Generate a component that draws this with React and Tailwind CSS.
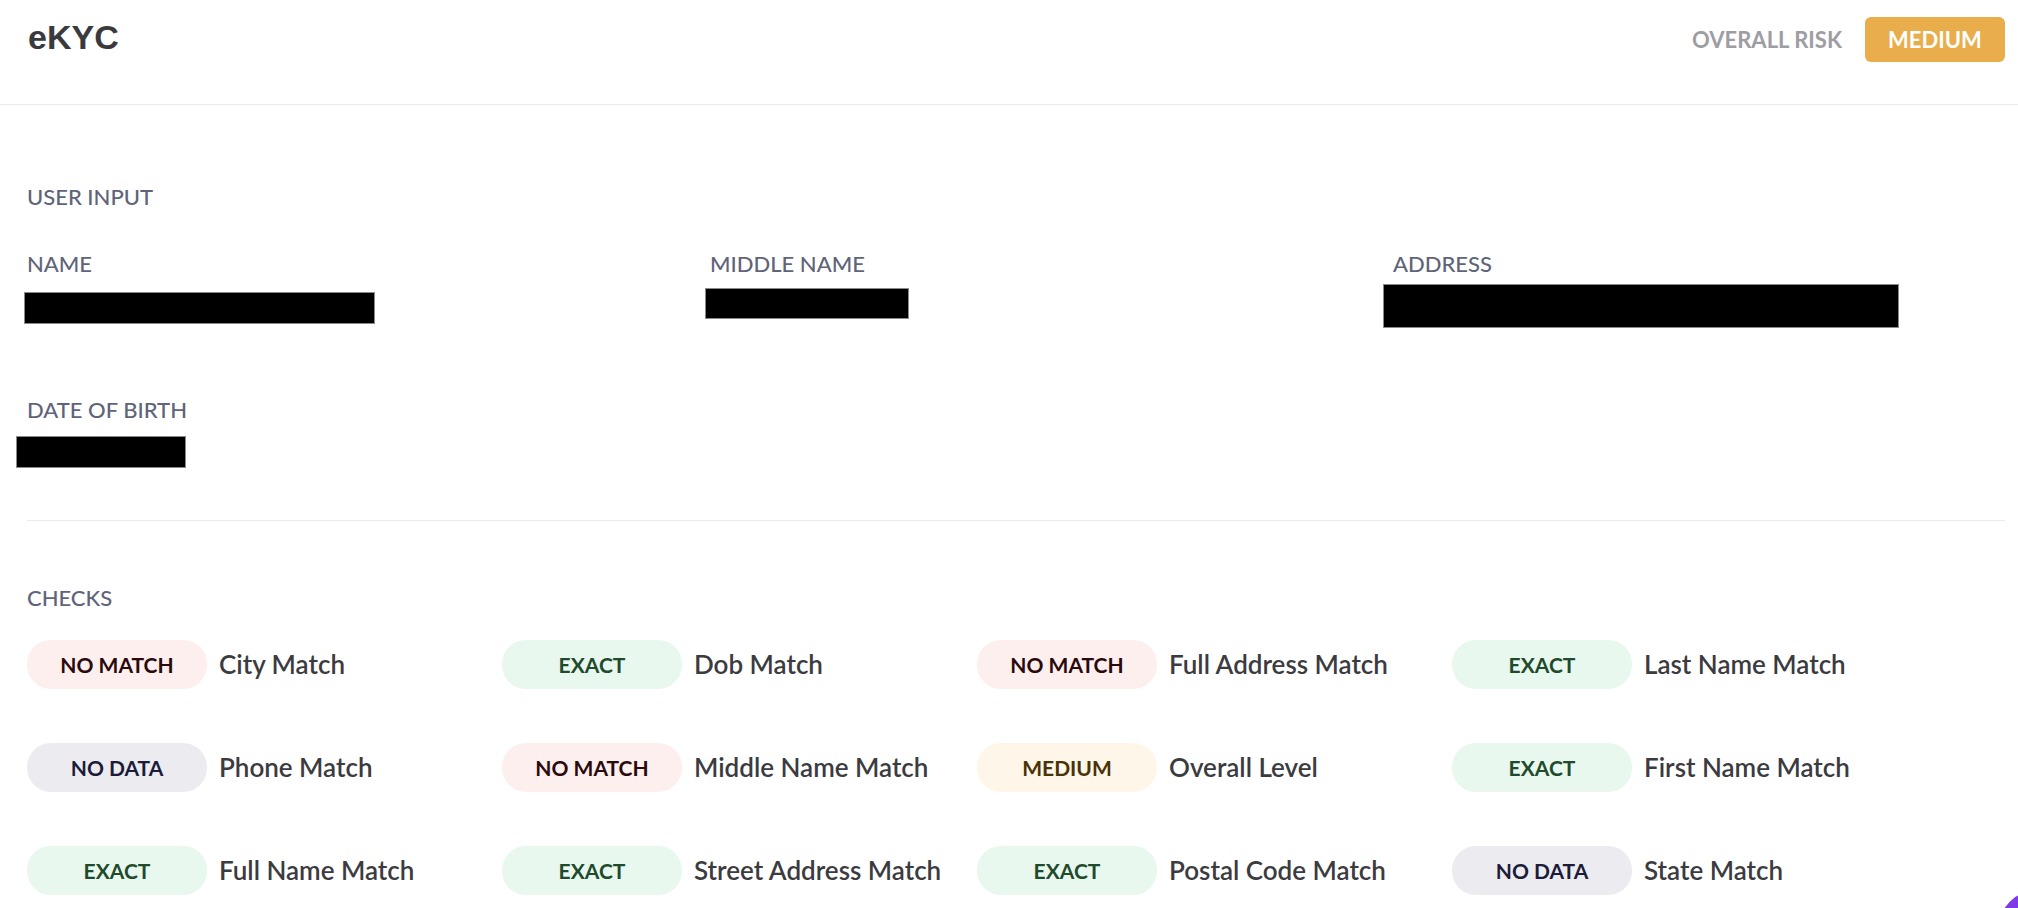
const checks = [
  ['NO MATCH', 'City Match'],
  ['EXACT', 'Dob Match'],
  ['NO MATCH', 'Full Address Match'],
  ['EXACT', 'Last Name Match'],
  ['NO DATA', 'Phone Match'],
  ['NO MATCH', 'Middle Name Match'],
  ['MEDIUM', 'Overall Level'],
  ['EXACT', 'First Name Match'],
  ['EXACT', 'Full Name Match'],
  ['EXACT', 'Street Address Match'],
  ['EXACT', 'Postal Code Match'],
  ['NO DATA', 'State Match'],
];

const pillStyles = {
  'NO MATCH': 'bg-[#fcefee] text-[#2a0a0c]',
  EXACT: 'bg-[#e8f8ee] text-[#1f4a2c]',
  'NO DATA': 'bg-[#ececf0] text-[#1c1c3a]',
  MEDIUM: 'bg-[#fef6e8] text-[#4a3209]',
};

const Field = ({ label, barClass }) => (
  <div className="flex flex-col">
    <div className="text-[22px] leading-[22px] text-[#5f6478] font-medium">{label}</div>
    <div className={`bg-black border border-[#8a8a8a] ${barClass}`} />
  </div>
);

export default function App() {
  return (
    <div className="min-h-screen bg-white font-['Lato',sans-serif] relative overflow-hidden">
      {/* Header */}
      <div className="h-[105px] border-b border-[#ebe9f2] flex items-start justify-between pl-[28px] pr-[13px]">
        <h1 className="mt-[20px] font-['Liberation_Sans',Arial,sans-serif] font-bold text-[34px] leading-[34px] text-[#3a3a3e]">
          eKYC
        </h1>
        <div className="mt-[17px] flex items-center gap-[23px]">
          <span className="text-[22px] font-bold text-[#9d9da3]">OVERALL RISK</span>
          <div className="w-[140px] h-[45px] rounded-md bg-[#e9ad4c] flex items-center justify-center text-white text-[22px] font-bold">
            MEDIUM
          </div>
        </div>
      </div>

      <div className="pl-[27px] pr-[13px]">
        {/* User input */}
        <div className="pt-[81px]">
          <div className="text-[22px] leading-[22px] text-[#5f6478] font-medium">USER INPUT</div>
          <div className="mt-[45px] grid grid-cols-[repeat(3,683px)] gap-y-[71px] items-start">
            <Field label="NAME" barClass="mt-[17px] ml-[-3px] w-[351px] h-[32px]" />
            <Field label="MIDDLE NAME" barClass="mt-[13px] ml-[-5px] w-[204px] h-[31px]" />
            <Field label="ADDRESS" barClass="mt-[9px] ml-[-10px] w-[516px] h-[44px]" />
            <Field label="DATE OF BIRTH" barClass="mt-[15px] ml-[-11px] w-[170px] h-[32px]" />
          </div>
        </div>

        <div className="mt-[52px] h-px bg-[#ebe9f2]" />

        {/* Checks */}
        <div className="pt-[66px]">
          <div className="text-[22px] leading-[22px] text-[#5f6478] font-medium">CHECKS</div>
          <div className="mt-[31px] grid grid-cols-[repeat(4,475px)] gap-y-[54px]">
            {checks.map(([status, label]) => (
              <div key={label} className="flex items-center gap-[12px]">
                <div
                  className={`w-[180px] h-[49px] rounded-[24px] flex items-center justify-center text-[21px] font-bold ${pillStyles[status]}`}
                >
                  {status}
                </div>
                <span className="text-[26px] font-semibold text-[#3b3b40]">{label}</span>
              </div>
            ))}
          </div>
        </div>
      </div>

      {/* Chat bubble */}
      <div className="fixed right-[-60px] bottom-[-62px] w-20 h-20 rounded-full bg-[#7d3ae6]" />
    </div>
  );
}
